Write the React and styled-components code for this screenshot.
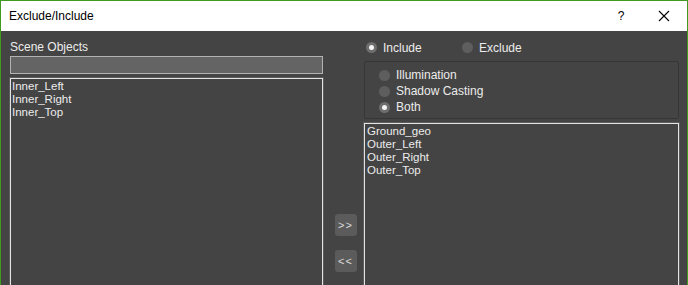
import styled, { createGlobalStyle } from "styled-components";

const GlobalStyle = createGlobalStyle`
  html, body {
    margin: 0;
    padding: 0;
    overflow: hidden;
    background: #444444;
  }
  body {
    font-family: "Liberation Sans", "Noto Sans", sans-serif;
    font-size: 12px;
  }
`;

const Window = styled.div`
  width: 688px;
  height: 285px;
  box-sizing: border-box;
  border: 1px solid #3f9a1f;
  border-bottom: none;
  display: flex;
  flex-direction: column;
  overflow: hidden;
`;

const TitleBar = styled.div`
  height: 30px;
  flex: none;
  background: #ffffff;
  display: flex;
  align-items: center;
  padding-left: 8px;
  color: #000;
  font-size: 12px;
`;

const Title = styled.span`
  flex: 1;
`;

const TitleButton = styled.span`
  width: ${(p) => p.$width || 46}px;
  display: flex;
  justify-content: center;
  align-items: center;
`;

const Body = styled.div`
  flex: 1;
  background: #444444;
  display: grid;
  grid-template-columns: 313px 41px 315px;
  padding: 8px 0 0 9px;
  color: #ececec;
`;

const Column = styled.div`
  display: flex;
  flex-direction: column;
`;

const Label = styled.div`
  height: 17px;
  line-height: 17px;
`;

const SearchField = styled.div`
  height: 16px;
  background: #646464;
  border: 1px solid #b2b2b2;
`;

const ListBox = styled.div`
  margin-top: ${(p) => p.$top}px;
  height: 240px;
  border: 1px solid #e4e4e4;
  box-shadow: 0 0 0 1px #5c5c5c;
  padding: 1px ${(p) => p.$pad || 1}px;
  line-height: 13px;
  font-size: 11.5px;
`;

const Middle = styled.div`
  display: flex;
  flex-direction: column;
  align-items: center;
  padding: 175px 0 0 4px;
  gap: 14px;
`;

const ArrowButton = styled.div`
  width: 22px;
  height: 22px;
  border-radius: 3px;
  background: #5b5b5b;
  color: #dcdcdc;
  font-size: 11px;
  display: flex;
  align-items: center;
  justify-content: center;
  letter-spacing: 1px;
`;

const RadioRow = styled.div`
  display: flex;
  align-items: center;
  height: 17px;
  padding-left: 2px;
`;

const RadioItem = styled.label`
  display: flex;
  align-items: center;
  gap: 6px;
  width: ${(p) => p.$width || "auto"};
  height: 16px;
`;

const RadioDot = styled.span`
  width: 11px;
  height: 11px;
  border-radius: 50%;
  background: ${(p) => (p.$checked ? "#6e6e6e" : "#5e5e5e")};
  display: flex;
  align-items: center;
  justify-content: center;
  flex: none;

  &::after {
    content: "";
    width: 5px;
    height: 5px;
    border-radius: 50%;
    background: #f4f4f4;
    display: ${(p) => (p.$checked ? "block" : "none")};
  }
`;

const GroupBox = styled.div`
  box-sizing: border-box;
  margin-top: 5px;
  height: 58px;
  border: 1px solid #363636;
  border-radius: 2px;
  padding: 5px 0 0 14px;
  display: flex;
  flex-direction: column;
`;

const Radio = ({ label, checked, width }) => (
  <RadioItem $width={width}>
    <RadioDot $checked={checked} />
    {label}
  </RadioItem>
);

export default function App() {
  return (
    <>
      <GlobalStyle />
      <Window>
        <TitleBar>
          <Title>Exclude/Include</Title>
          <TitleButton $width={40}>?</TitleButton>
          <TitleButton $width={46}>
            <svg width="12" height="12" viewBox="0 0 12 12">
              <path d="M1 1L11 11M11 1L1 11" stroke="#000" strokeWidth="1.1" />
            </svg>
          </TitleButton>
        </TitleBar>
        <Body>
          <Column>
            <Label>Scene Objects</Label>
            <SearchField />
            <ListBox $top={4}>
              <div>Inner_Left</div>
              <div>Inner_Right</div>
              <div>Inner_Top</div>
            </ListBox>
          </Column>
          <Middle>
            <ArrowButton>&gt;&gt;</ArrowButton>
            <ArrowButton>&lt;&lt;</ArrowButton>
          </Middle>
          <Column>
            <RadioRow>
              <Radio label="Include" checked width="96px" />
              <Radio label="Exclude" />
            </RadioRow>
            <GroupBox>
              <Radio label="Illumination" />
              <Radio label="Shadow Casting" />
              <Radio label="Both" checked />
            </GroupBox>
            <ListBox $top={4} $pad={2}>
              <div>Ground_geo</div>
              <div>Outer_Left</div>
              <div>Outer_Right</div>
              <div>Outer_Top</div>
            </ListBox>
          </Column>
        </Body>
      </Window>
    </>
  );
}
